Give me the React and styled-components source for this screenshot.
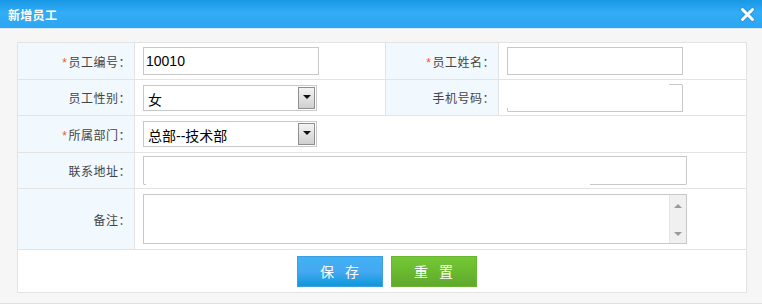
import React from 'react';
import styled, { createGlobalStyle, css } from 'styled-components';

const GlobalStyle = createGlobalStyle`
  html, body {
    margin: 0;
    padding: 0;
    background: #f6f6f6;
  }
  body {
    font-family: "Liberation Sans", "Noto Sans CJK SC", sans-serif;
    width: 762px;
    height: 304px;
    overflow: hidden;
  }
`;

const Dialog = styled.div`
  width: 762px;
  height: 304px;
  display: flex;
  flex-direction: column;
  background: #f6f6f6;
  border-bottom: 1px solid #d3e3ef;
  box-sizing: border-box;
`;

const TitleBar = styled.div`
  height: 28px;
  display: flex;
  align-items: center;
  justify-content: space-between;
  padding: 0 7px 0 8px;
  background: linear-gradient(to bottom, #1898e6 0%, #34acf6 45%, #2ba6f2 100%);
  border-bottom: 1px solid #dbe7f0;
`;

const Title = styled.span`
  color: #fff;
  font-size: 12px;
  font-weight: bold;
  letter-spacing: 0.3px;
`;

const CloseButton = styled.svg`
  width: 15px;
  height: 15px;
  cursor: pointer;
  filter: drop-shadow(0 0 1px rgba(0, 60, 120, 0.4));
`;

const Body = styled.div`
  padding: 13px 15px 0 17px;
`;

const FormGrid = styled.div`
  display: grid;
  grid-template-columns: 116px 250px 112px 1fr;
  grid-template-rows: 36px 35px 36px 35px 60px 42px;
  gap: 1px;
  background: #e3e3e3;
  border: 1px solid #e3e3e3;
`;

const Label = styled.div`
  background: #f1f8fe;
  display: flex;
  align-items: center;
  justify-content: flex-end;
  padding-right: 3px;
  font-size: 12px;
  letter-spacing: 0.5px;
  color: #444;
`;

const Star = styled.span`
  color: #f25a14;
  font-size: 12px;
  margin-right: 1px;
  position: relative;
  top: 2px;
`;

const Cell = styled.div`
  background: #fff;
  display: flex;
  align-items: center;
  padding-left: 8px;
  ${(p) => p.$span && css`grid-column: span ${p.$span};`}
`;

const ButtonCell = styled.div`
  grid-column: span 4;
  background: #fff;
  display: flex;
  align-items: center;
  justify-content: center;
  gap: 8px;
  padding-left: 9px;
`;

const TextInput = styled.div`
  box-sizing: border-box;
  width: ${(p) => p.$width}px;
  height: ${(p) => p.$height || 28}px;
  border: 1px solid #c8c8c8;
  font-size: 14px;
  color: #000;
  padding-left: 2px;
  display: flex;
  align-items: center;
  position: relative;
  background: #fff;
`;

/* fields whose border was only partly painted in the original */
const MobileInput = styled(TextInput)`
  border-top-color: transparent;
  border-left-color: transparent;
  &::before {
    content: '';
    position: absolute;
    top: -1px;
    right: 0;
    width: 13px;
    border-top: 1px solid #c8c8c8;
  }
  &::after {
    content: '';
    position: absolute;
    left: -1px;
    bottom: 0;
    height: 3px;
    border-left: 1px solid #c8c8c8;
  }
`;

const AddressInput = styled(TextInput)`
  border-bottom-color: transparent;
  &::before {
    content: '';
    position: absolute;
    bottom: -1px;
    right: 0;
    width: 96px;
    border-bottom: 1px solid #c8c8c8;
  }
  &::after {
    content: '';
    position: absolute;
    left: 0;
    bottom: -1px;
    width: 2px;
    border-bottom: 1px solid #c8c8c8;
  }
`;

const Select = styled.div`
  box-sizing: border-box;
  width: 174px;
  height: 26px;
  border: 1px solid #c8c8c8;
  display: flex;
  align-items: stretch;
  background: #fff;
`;

const SelectText = styled.span`
  flex: 1;
  display: flex;
  align-items: center;
  padding: 2px 0 0 4px;
  font-size: 14px;
  color: #000;
`;

const SelectArrow = styled.span`
  width: 15px;
  margin: 1px;
  border: 1px solid #8e8e8e;
  background: linear-gradient(to bottom, #f4f4f4 0%, #e2e2e2 50%, #cfcfcf 100%);
  display: flex;
  align-items: center;
  justify-content: center;
  &::after {
    content: '';
    border-left: 4px solid transparent;
    border-right: 4px solid transparent;
    border-top: 4px solid #111;
    margin-bottom: 2px;
  }
`;

const TextArea = styled.div`
  box-sizing: border-box;
  width: 544px;
  height: 50px;
  border: 1px solid #c8c8c8;
  display: flex;
  justify-content: flex-end;
  background: #fff;
`;

const ScrollBar = styled.div`
  width: 17px;
  background: #f0f0f0;
  border-left: 1px solid #e4e4e4;
  display: flex;
  flex-direction: column;
  justify-content: space-between;
  align-items: center;
  padding: 9px 0 7px;
  box-sizing: border-box;
`;

const ScrollArrow = styled.span`
  border-left: 4px solid transparent;
  border-right: 4px solid transparent;
  ${(p) =>
    p.$up
      ? css`border-bottom: 4px solid #9a9a9a;`
      : css`border-top: 4px solid #9a9a9a;`}
`;

const Button = styled.button`
  width: 86px;
  height: 31px;
  border: 1px solid ${(p) => (p.$tone === 'green' ? '#69b431' : '#3d9fe0')};
  color: #fff;
  font-family: "Liberation Sans", "Noto Sans CJK SC", sans-serif;
  font-size: 14px;
  letter-spacing: 11px;
  padding: 0 0 0 11px;
  cursor: pointer;
  background: ${(p) =>
    p.$tone === 'green'
      ? 'linear-gradient(to bottom, #74c834 0%, #6ab930 50%, #5fa82d 100%)'
      : 'linear-gradient(to bottom, #3fb2f4 0%, #45a8f2 50%, #0e98da 100%)'};
`;

const RequiredLabel = ({ children }) => (
  <Label>
    <Star>*</Star>
    {children}
  </Label>
);

export default function App() {
  return (
    <>
      <GlobalStyle />
      <Dialog>
        <TitleBar>
          <Title>新增员工</Title>
          <CloseButton viewBox="0 0 15 15">
            <path d="M2.5 2.5 L12.5 12.5 M12.5 2.5 L2.5 12.5" stroke="#fff" strokeWidth="3" strokeLinecap="round" />
          </CloseButton>
        </TitleBar>
        <Body>
          <FormGrid>
            <RequiredLabel>员工编号：</RequiredLabel>
            <Cell>
              <TextInput $width={176}>10010</TextInput>
            </Cell>
            <RequiredLabel>员工姓名：</RequiredLabel>
            <Cell>
              <TextInput $width={176} />
            </Cell>

            <Label>员工性别：</Label>
            <Cell>
              <Select>
                <SelectText>女</SelectText>
                <SelectArrow />
              </Select>
            </Cell>
            <Label>手机号码：</Label>
            <Cell>
              <MobileInput $width={176} />
            </Cell>

            <RequiredLabel>所属部门：</RequiredLabel>
            <Cell $span={3}>
              <Select>
                <SelectText>总部--技术部</SelectText>
                <SelectArrow />
              </Select>
            </Cell>

            <Label>联系地址：</Label>
            <Cell $span={3}>
              <AddressInput $width={544} $height={29} />
            </Cell>

            <Label>备注：</Label>
            <Cell $span={3}>
              <TextArea>
                <ScrollBar>
                  <ScrollArrow $up />
                  <ScrollArrow />
                </ScrollBar>
              </TextArea>
            </Cell>

            <ButtonCell>
              <Button>保存</Button>
              <Button $tone="green">重置</Button>
            </ButtonCell>
          </FormGrid>
        </Body>
      </Dialog>
    </>
  );
}
